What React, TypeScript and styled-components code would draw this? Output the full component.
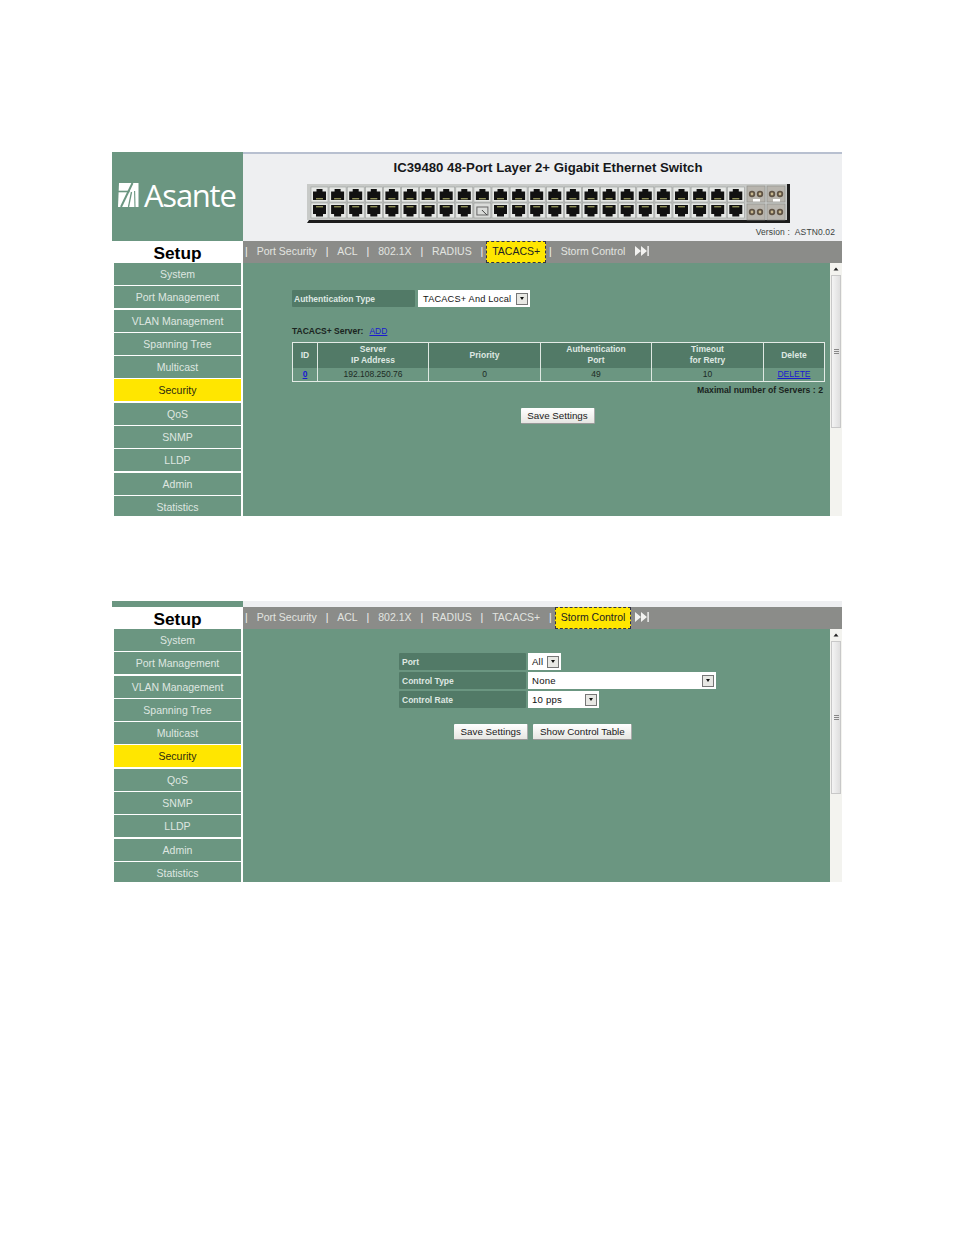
import React from "react";
import styled, { createGlobalStyle } from "styled-components";

const Global = createGlobalStyle`
  html, body { margin: 0; padding: 0; background: #fff; }
  body { font-family: "Liberation Sans", Arial, sans-serif; }
`;

const GREEN = "#6b9681";
const DARK = "#527a67";

const Page = styled.div`
  width: 954px;
  height: 1235px;
  box-sizing: border-box;
  padding: 152px 0 0 112px;
  display: flex;
  flex-direction: column;
  gap: 85px;
`;
const Frame = styled.section`
  width: 730px;
  display: flex;
  flex-direction: column;
`;
const Header = styled.header`
  height: 89px;
  display: grid;
  grid-template-columns: 131px minmax(0, 1fr);
`;
const LogoCell = styled.div`
  background: ${GREEN};
  display: flex;
  align-items: center;
  gap: 5px;
  padding: 0 0 3px 6px;
  box-sizing: border-box;
`;
const LogoText = styled.span`
  font-family: "Open Sans", sans-serif;
  font-size: 31px;
  font-weight: 500;
  letter-spacing: -1.25px;
  color: #fff;
  line-height: 1;
`;
const Banner = styled.div`
  background: #eeeff1;
  border-top: 2px solid #b8c0d0;
  box-sizing: border-box;
  display: flex;
  flex-direction: column;
  align-items: center;
  padding: 6px 0 0 11px;
`;
const Title = styled.h1`
  margin: 0 0 9px;
  font-size: 13.2px;
  line-height: 15px;
  font-weight: 700;
  color: #16181a;
`;
const SwitchArt = styled.svg`
  display: block;
  width: 483px;
  height: 39px;
  flex: none;
`;
const Version = styled.div`
  align-self: flex-end;
  margin: 4px 7px 0 0;
  font-size: 8.5px;
  line-height: 11px;
  letter-spacing: 0.12px;
  color: #3a4240;
`;
const Strip = styled.div`
  height: 6px;
  display: grid;
  grid-template-columns: 131px 1fr;
`;
const StripLeft = styled.div`background: ${GREEN};`;
const StripRight = styled.div`background: #eeeff1;`;
const NavRow = styled.div`
  height: 22px;
  display: grid;
  grid-template-columns: 131px minmax(0, 1fr);
`;
const SetupCell = styled.div`
  background: #fff;
  font-size: 17.3px;
  font-weight: 700;
  color: #000;
  display: flex;
  align-items: center;
  justify-content: center;
  padding-top: 2px;
  box-sizing: border-box;
`;
const Tabs = styled.nav`
  background: #8b8c89;
  height: 22px;
  display: flex;
  align-items: flex-start;
  padding-left: 2px;
  box-sizing: border-box;
  font-size: 10.5px;
  line-height: 20px;
  color: #e2e4e0;
`;
const Sep = styled.span`
  flex: none;
  padding: 0 8.9px;
  color: #f2f2f0;
  &:first-child { padding-left: 0; }
`;
const Tab = styled.span<{ $active?: boolean }>`
  flex: none;
  white-space: nowrap;
  box-sizing: border-box;
  ${(p) =>
    p.$active
      ? `background:#ffe600;color:#222;height:22px;line-height:18px;padding:0 5px;margin:0 -6px;border:1px dashed #334;`
      : ""}
`;
const SkipIcon = styled.svg`
  width: 14px;
  height: 12px;
  margin: 4px 0 0 10px;
  flex: none;
`;
const Body = styled.div`
  height: 253px;
  display: grid;
  grid-template-columns: 131px minmax(0, 1fr) 12px;
`;
const Side = styled.aside`
  background: #fff;
  height: 253px;
  overflow: hidden;
  padding: 0 2px;
  display: grid;
  grid-auto-rows: 22px;
  row-gap: 1.3px;
`;
const SideItem = styled.div<{ $active?: boolean }>`
  background: ${(p) => (p.$active ? "#ffe600" : GREEN)};
  color: ${(p) => (p.$active ? "#2a2a10" : "#dfe6e0")};
  font-size: 10.5px;
  display: flex;
  align-items: center;
  justify-content: center;
`;
const Content = styled.main`
  background: ${GREEN};
  box-sizing: border-box;
  font-size: 8.5px;
`;
const Scroll = styled.div`
  background: #f3f3ef;
  display: flex;
  flex-direction: column;
  align-items: stretch;
`;
const ScrollArrow = styled.svg`
  display: block;
  width: 12px;
  height: 12px;
`;
const Thumb = styled.div`
  height: 153px;
  margin: 0 1px;
  box-sizing: border-box;
  border: 1px solid #c8c8c8;
  background: linear-gradient(90deg, #f4f4f4, #dedede);
  display: flex;
  align-items: center;
  justify-content: center;
`;
const Grip = styled.div`
  width: 5px;
  height: 5px;
  border-top: 1px solid #888;
  border-bottom: 1px solid #888;
  position: relative;
  box-sizing: border-box;
  &::after {
    content: "";
    position: absolute;
    left: 0;
    right: 0;
    top: 1px;
    height: 1px;
    background: #888;
  }
`;
const TacacsPane = styled.div`
  padding: 27px 6px 0 49px;
  display: flex;
  flex-direction: column;
`;
const AuthRow = styled.div`
  display: flex;
  gap: 3px;
  height: 17px;
`;
const LabelCell = styled.div<{ $w: number; $pad?: number }>`
  width: ${(p) => p.$w}px;
  height: 17px;
  background: ${DARK};
  color: #dfe8e2;
  font-weight: 700;
  font-size: 8.5px;
  display: flex;
  align-items: center;
  padding-left: ${(p) => p.$pad ?? 2}px;
  box-sizing: border-box;
  border-radius: 1px;
`;
const SelectBox = styled.div<{ $w: number; $fs?: number; $pad?: number }>`
  width: ${(p) => p.$w}px;
  height: 17px;
  background: #fff;
  color: #111;
  font-size: ${(p) => p.$fs ?? 9.2}px;
  letter-spacing: 0.2px;
  display: flex;
  align-items: center;
  justify-content: space-between;
  padding: 0 2px 0 ${(p) => p.$pad ?? 5}px;
  box-sizing: border-box;
`;
const ArrowBtn = styled.span`
  width: 12px;
  height: 12px;
  background: #e8e8e4;
  border: 1px solid #777;
  box-sizing: border-box;
  display: flex;
  align-items: center;
  justify-content: center;
  &::after {
    content: "";
    border-left: 2.5px solid transparent;
    border-right: 2.5px solid transparent;
    border-top: 3px solid #111;
  }
`;
const ServerLine = styled.div`
  margin-top: 19px;
  height: 11px;
  line-height: 11px;
  font-size: 8.5px;
  font-weight: 700;
  color: #1a2420;
  display: flex;
  gap: 6px;
`;
const BlueLink = styled.a<{ $bold?: boolean }>`
  color: #1a1ad0;
  text-decoration: underline;
  font-weight: ${(p) => (p.$bold ? 700 : 400)};
`;
const Grid = styled.table`
  margin-top: 5px;
  width: 532px;
  border-collapse: collapse;
  table-layout: fixed;
  border: 1px solid #e4ebe6;
`;
const Th = styled.th<{ $w: number }>`
  width: ${(p) => p.$w}px;
  box-sizing: border-box;
  height: 25px;
  padding: 0;
  background: ${DARK};
  color: #dfe8e2;
  font-size: 8.5px;
  line-height: 11px;
  font-weight: 700;
  border-right: 1px solid #dfe8e2;
  &:last-child { border-right: 0; }
`;
const Td = styled.td`
  height: 13px;
  padding: 0;
  background: #6b9681;
  color: #1d2b25;
  font-size: 8.5px;
  line-height: 12px;
  text-align: center;
  border-right: 1px solid #dfe8e2;
  &:last-child { border-right: 0; }
`;
const MaxLine = styled.div`
  margin-top: 3px;
  width: 531px;
  text-align: right;
  font-size: 8.7px;
  line-height: 11px;
  font-weight: 700;
  color: #1a2420;
`;
const CenterBtns = styled.div`
  margin-top: 12px;
  width: 532px;
  display: flex;
  justify-content: center;
`;
const Btn = styled.button`
  height: 16px;
  padding: 0 6.5px;
  font-family: inherit;
  font-size: 9.8px;
  color: #1a1a1a;
  background: linear-gradient(#fff, #e6e6e2);
  border: 0;
  border-bottom: 1px solid #999;
  border-right: 1px solid #aaa;
  border-radius: 1px;
  white-space: nowrap;
`;
const StormPane = styled.div`
  padding: 24px 0 0 156px;
  display: flex;
  flex-direction: column;
`;
const FormRow = styled.div`
  display: flex;
  gap: 2px;
  height: 17px;
  margin-bottom: 2px;
`;
const StormBtns = styled.div`
  margin: 14px 0 0 55px;
  display: flex;
  gap: 5px;
`;
const Asante = () => (
  <svg width="21" height="24" viewBox="0 0 21 24" style={{ flex: "none" }}>
    <path d="M1 0H20.5V24H0Z" fill="#fff" />
    <path d="M0 8.5H11.5" stroke="#6b9681" strokeWidth="1.6" />
    <path d="M14.5 0L3 24" stroke="#6b9681" strokeWidth="2" />
    <path d="M13.5 9L10.5 24" stroke="#6b9681" strokeWidth="1.3" />
    <path d="M16.6 8L17 24" stroke="#6b9681" strokeWidth="1.1" />
  </svg>
);

const Rj45: React.FC<{ x: number; y: number; down?: boolean }> = ({ x, y, down }) => (
  <g transform={`translate(${x} ${y})`}>
    <rect width="17" height="15" fill="#e6e8e6" stroke="#9a9d9b" strokeWidth="0.6" />
    {down ? (
      <path d="M2 2H15V11H12V13.5H5V11H2Z" fill="#111" />
    ) : (
      <path d="M5.5 2H11.5V4.5H15V13H2V4.5H5.5Z" fill="#111" />
    )}
    <rect x="5" y={down ? 3 : 11} width="7" height="1.4" fill="#8f8f58" />
  </g>
);
const Sfp: React.FC<{ x: number; y: number }> = ({ x, y }) => (
  <g transform={`translate(${x} ${y})`}>
    <rect width="18" height="16" fill="#b8b5ae" stroke="#8a8a86" strokeWidth="0.6" />
    <circle cx="5" cy="8" r="3.2" fill="#5e5244" />
    <circle cx="13" cy="8" r="3.2" fill="#5e5244" />
    <circle cx="5" cy="8" r="1.4" fill="#c8b890" />
    <circle cx="13" cy="8" r="1.4" fill="#c8b890" />
  </g>
);
const cols = Array.from({ length: 24 }, (_, i) => 4 + i * 18.1);
const SwitchPanel = () => (
  <SwitchArt viewBox="0 0 483 39">
    <rect x="0" y="0" width="480" height="36" fill="#c8cac8" />
    <path d="M480 0H483V39H0L2 36H480Z" fill="#1c1c1c" />
    {cols.map((x) => (
      <Rj45 key={x} x={x} y={3} />
    ))}
    {cols.map((x, i) =>
      i === 9 ? (
        <g key={x}>
          <rect x={x} y={19} width="17" height="15" fill="#dadcda" stroke="#8d908e" strokeWidth="0.6" />
          <rect x={x + 3} y={23} width="11" height="8" fill="none" stroke="#666" />
          <path d={`M${x + 8} 26l5 5`} stroke="#444" />
        </g>
      ) : (
        <Rj45 key={x} x={x} y={19} down />
      )
    )}
    <Sfp x={440} y={2} />
    <Sfp x={460} y={2} />
    <Sfp x={440} y={20} />
    <Sfp x={460} y={20} />
    <rect x="446" y="15" width="7" height="2.5" fill="#fff" />
    <rect x="466" y="15" width="7" height="2.5" fill="#fff" />
  </SwitchArt>
);

const MENU = [
  "System",
  "Port Management",
  "VLAN Management",
  "Spanning Tree",
  "Multicast",
  "Security",
  "QoS",
  "SNMP",
  "LLDP",
  "Admin",
  "Statistics",
];
const TABS = ["Port Security", "ACL", "802.1X", "RADIUS", "TACACS+", "Storm Control"];

const FrameBody: React.FC<{ active: string; children: React.ReactNode }> = ({ active, children }) => (
  <>
    <NavRow>
      <SetupCell>Setup</SetupCell>
      <Tabs>
        {TABS.map((t) => (
          <React.Fragment key={t}>
            <Sep>|</Sep>
            <Tab $active={t === active}>{t}</Tab>
          </React.Fragment>
        ))}
        <SkipIcon viewBox="0 0 14 12">
          <path d="M0 1L6 6L0 11ZM6 1L12 6L6 11Z" fill="#f2f2f0" />
          <rect x="12.4" y="1" width="1.4" height="10" fill="#f2f2f0" />
        </SkipIcon>
      </Tabs>
    </NavRow>
    <Body>
      <Side>
        {MENU.map((m) => (
          <SideItem key={m} $active={m === "Security"}>
            {m}
          </SideItem>
        ))}
      </Side>
      <Content>{children}</Content>
      <Scroll>
        <ScrollArrow viewBox="0 0 12 12">
          <path d="M6 4.5L8.5 7.5H3.5Z" fill="#222" />
        </ScrollArrow>
        <Thumb>
          <Grip />
        </Thumb>
      </Scroll>
    </Body>
  </>
);

export default function App() {
  return (
    <>
      <Global />
      <Page>
        <Frame>
          <Header>
            <LogoCell>
              <Asante />
              <LogoText>Asante</LogoText>
            </LogoCell>
            <Banner>
              <Title>IC39480 48-Port Layer 2+ Gigabit Ethernet Switch</Title>
              <SwitchPanel />
              <Version>Version : &nbsp;ASTN0.02</Version>
            </Banner>
          </Header>
          <FrameBody active="TACACS+">
            <TacacsPane>
              <AuthRow>
                <LabelCell $w={123}>Authentication Type</LabelCell>
                <SelectBox $w={112}>
                  TACACS+ And Local
                  <ArrowBtn />
                </SelectBox>
              </AuthRow>
              <ServerLine>
                TACACS+ Server:
                <BlueLink>ADD</BlueLink>
              </ServerLine>
              <Grid>
                <thead>
                  <tr>
                    <Th $w={25}>ID</Th>
                    <Th $w={111}>
                      Server
                      <br />
                      IP Address
                    </Th>
                    <Th $w={112}>Priority</Th>
                    <Th $w={111}>
                      Authentication
                      <br />
                      Port
                    </Th>
                    <Th $w={112}>
                      Timeout
                      <br />
                      for Retry
                    </Th>
                    <Th $w={61}>Delete</Th>
                  </tr>
                </thead>
                <tbody>
                  <tr>
                    <Td>
                      <BlueLink $bold>0</BlueLink>
                    </Td>
                    <Td>192.108.250.76</Td>
                    <Td>0</Td>
                    <Td>49</Td>
                    <Td>10</Td>
                    <Td>
                      <BlueLink>DELETE</BlueLink>
                    </Td>
                  </tr>
                </tbody>
              </Grid>
              <MaxLine>Maximal number of Servers : 2</MaxLine>
              <CenterBtns>
                <Btn>Save Settings</Btn>
              </CenterBtns>
            </TacacsPane>
          </FrameBody>
        </Frame>
        <Frame>
          <Strip>
            <StripLeft />
            <StripRight />
          </Strip>
          <FrameBody active="Storm Control">
            <StormPane>
              <FormRow>
                <LabelCell $w={127} $pad={3}>Port</LabelCell>
                <SelectBox $w={33} $fs={9.6} $pad={4}>
                  All
                  <ArrowBtn />
                </SelectBox>
              </FormRow>
              <FormRow>
                <LabelCell $w={127} $pad={3}>Control Type</LabelCell>
                <SelectBox $w={188} $fs={9.6} $pad={4}>
                  None
                  <ArrowBtn />
                </SelectBox>
              </FormRow>
              <FormRow>
                <LabelCell $w={127} $pad={3}>Control Rate</LabelCell>
                <SelectBox $w={71} $fs={9.6} $pad={4}>
                  10 pps
                  <ArrowBtn />
                </SelectBox>
              </FormRow>
              <StormBtns>
                <Btn>Save Settings</Btn>
                <Btn>Show Control Table</Btn>
              </StormBtns>
            </StormPane>
          </FrameBody>
        </Frame>
      </Page>
    </>
  );
}
